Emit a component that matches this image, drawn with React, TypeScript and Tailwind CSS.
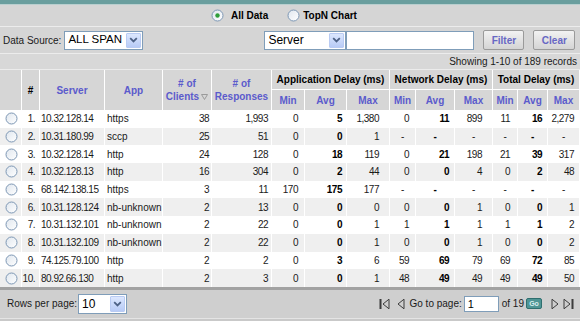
import React from "react";

type Row = {
  server: string;
  app: string;
  clients: string;
  responses: string;
  delays: string[];
};

const rows: Row[] = [
  { server: "10.32.128.14", app: "https", clients: "38", responses: "1,993", delays: ["0", "5", "1,380", "0", "11", "899", "11", "16", "2,279"] },
  { server: "10.31.180.99", app: "sccp", clients: "25", responses: "51", delays: ["0", "0", "1", "-", "-", "-", "-", "-", "-"] },
  { server: "10.32.128.14", app: "http", clients: "24", responses: "128", delays: ["0", "18", "119", "0", "21", "198", "21", "39", "317"] },
  { server: "10.32.128.13", app: "http", clients: "16", responses: "304", delays: ["0", "2", "44", "0", "0", "4", "0", "2", "48"] },
  { server: "68.142.138.15", app: "https", clients: "3", responses: "11", delays: ["170", "175", "177", "-", "-", "-", "-", "-", "-"] },
  { server: "10.31.128.124", app: "nb-unknown", clients: "2", responses: "13", delays: ["0", "0", "0", "0", "0", "1", "0", "0", "1"] },
  { server: "10.31.132.101", app: "nb-unknown", clients: "2", responses: "22", delays: ["0", "0", "1", "1", "1", "1", "1", "1", "2"] },
  { server: "10.31.132.109", app: "nb-unknown", clients: "2", responses: "22", delays: ["0", "0", "1", "0", "0", "1", "0", "0", "2"] },
  { server: "74.125.79.100", app: "http", clients: "2", responses: "2", delays: ["0", "3", "6", "59", "69", "79", "69", "72", "85"] },
  { server: "80.92.66.130", app: "http", clients: "2", responses: "3", delays: ["0", "0", "1", "48", "49", "49", "49", "49", "50"] },
];

// right padding for the numeric columns (clients, responses, 9 delay columns)
const pads = [
  "pr-[2px]",
  "pr-[3px]",
  "pr-[6px]",
  "pr-[4px]",
  "pr-[10px]",
  "pr-[6px]",
  "pr-[5px]",
  "pr-[10px]",
  "pr-[7px]",
  "pr-[5px]",
  "pr-[5px]",
];

const cols =
  "grid grid-cols-[22px_18px_65px_58px_49px_60px_33px_42px_43px_26px_39px_38px_25px_30px_32px]";

const Radio = ({ checked = false }: { checked?: boolean }) => (
  <svg width="13" height="13" viewBox="0 0 13 13" className="shrink-0">
    <defs>
      <linearGradient id="radioFill" x1="0" y1="0" x2="1" y2="1">
        <stop offset="0" stopColor="#dfe6ee" />
        <stop offset="1" stopColor="#ffffff" />
      </linearGradient>
    </defs>
    <circle cx="6.5" cy="6.5" r="5.5" fill="url(#radioFill)" stroke="#7d97b4" strokeWidth="1" />
    {checked && <circle cx="6.5" cy="6.5" r="2.2" fill="#2f9e3a" />}
  </svg>
);

const Chevron = () => (
  <svg width="9" height="6" viewBox="0 0 9 6">
    <path d="M1.2 1.2 L4.5 4.4 L7.8 1.2" stroke="#4d6185" strokeWidth="1.8" fill="none" />
  </svg>
);

const Select = ({
  value,
  className,
  textClass = "text-[12px]",
}: {
  value: string;
  className: string;
  textClass?: string;
}) => (
  <div className={`flex items-stretch border border-[#7f9db9] bg-white ${className}`}>
    <span
      className={`flex flex-1 items-center overflow-hidden whitespace-nowrap pl-[3px] text-black ${textClass}`}
    >
      {value}
    </span>
    <span className="m-[1px] flex w-[15px] shrink-0 items-center justify-center rounded-[1px] border border-[#b9cbf3] bg-gradient-to-b from-[#dce7fe] to-[#b8cbf6]">
      <Chevron />
    </span>
  </div>
);

const Btn = ({ label, className }: { label: string; className: string }) => (
  <button
    className={`flex h-[20px] items-center justify-center rounded-[2px] border border-[#9a9a9a] bg-gradient-to-b from-[#f2f2f2] to-[#d4d4d4] text-[10px] font-bold text-[#6767c4] ${className}`}
  >
    {label}
  </button>
);

const First = () => (
  <svg width="11" height="12" viewBox="0 0 11 12">
    <rect x="0.5" y="1" width="2" height="10" fill="#3c3c3c" />
    <path d="M10 1.2 L10 10.8 L4 6 Z" fill="none" stroke="#3c3c3c" strokeWidth="1" />
  </svg>
);
const Prev = () => (
  <svg width="8" height="12" viewBox="0 0 8 12">
    <path d="M7 1.2 L7 10.8 L1 6 Z" fill="none" stroke="#3c3c3c" strokeWidth="1" />
  </svg>
);
const Next = () => (
  <svg width="8" height="12" viewBox="0 0 8 12">
    <path d="M1 1.2 L1 10.8 L7 6 Z" fill="none" stroke="#3c3c3c" strokeWidth="1" />
  </svg>
);
const Last = () => (
  <svg width="11" height="12" viewBox="0 0 11 12">
    <path d="M1 1.2 L1 10.8 L7 6 Z" fill="none" stroke="#3c3c3c" strokeWidth="1" />
    <rect x="8.5" y="1" width="2" height="10" fill="#3c3c3c" />
  </svg>
);

const SortDown = () => (
  <svg width="7" height="6" viewBox="0 0 7 6" className="ml-[2px] inline-block">
    <path d="M0.5 0.5 L6.5 0.5 L3.5 5.5 Z" fill="none" stroke="#9a9a9a" strokeWidth="1" />
  </svg>
);

const th = "flex items-center justify-center border-r border-white text-[10px] font-bold";
const blue = "text-[#5b5bcc]";

export default function App() {
  return (
    <div className="w-[580px] h-[321px] overflow-hidden bg-[#d5d5d5] font-['Liberation_Sans',Arial,sans-serif] text-[10px] text-[#1a1a1a]">
      {/* top bar */}
      <div className="h-[4px] bg-[#6a9e9e]" />
      <div className="h-[1px] bg-[#b9cfcf]" />

      {/* view switch */}
      <div className="flex h-[21px] items-center pl-[211px]">
        <Radio checked />
        <span className="ml-[7px] font-bold text-black">All Data</span>
        <span className="ml-[19px] flex">
          <Radio />
        </span>
        <span className="ml-[3px] font-bold text-black">TopN Chart</span>
      </div>
      <div className="h-[1px] bg-[#ececec]" />

      {/* filter row */}
      <div className="flex h-[26px] items-center pl-[3px]">
        <span>Data Source:</span>
        <Select value="ALL SPAN" className="ml-[3px] h-[19px] w-[79px]" textClass="text-[11.5px]" />
        <Select value="Server" className="ml-[121px] h-[19px] w-[82px]" />
        <div className="h-[19px] w-[128px] border border-[#7f9db9] bg-white" />
        <Btn label="Filter" className="ml-[9px] w-[41px]" />
        <Btn label="Clear" className="ml-[9px] w-[42px]" />
      </div>
      <div className="h-[1px] bg-[#ececec]" />

      {/* info row */}
      <div className="flex h-[15px] items-center justify-end bg-[#d8d8d8] pr-[3px]">
        Showing 1-10 of 189 records
      </div>
      <div className="h-[1px] bg-[#ececec]" />

      {/* header */}
      <div className={`${cols} h-[40px] grid-rows-[20px_20px] bg-[#d6d6d6]`}>
        <div className={`${th} row-span-2`} />
        <div className={`${th} row-span-2 text-black`}>#</div>
        <div className={`${th} row-span-2 ${blue}`}>Server</div>
        <div className={`${th} row-span-2 ${blue}`}>App</div>
        <div className={`${th} row-span-2 flex-col leading-[13px] ${blue}`}>
          <span># of</span>
          <span className="flex items-center">
            Clients
            <SortDown />
          </span>
        </div>
        <div className={`${th} row-span-2 flex-col leading-[13px] ${blue}`}>
          <span># of</span>
          <span>Responses</span>
        </div>
        <div className={`${th} col-span-3 border-b text-black`}>Application Delay (ms)</div>
        <div className={`${th} col-span-3 border-b text-black`}>Network Delay (ms)</div>
        <div className={`${th} col-span-3 border-b text-black`}>Total Delay (ms)</div>
        {["Min", "Avg", "Max", "Min", "Avg", "Max", "Min", "Avg", "Max"].map((h, i) => (
          <div key={i} className={`${th} ${blue}`}>
            {h}
          </div>
        ))}
      </div>

      {/* body */}
      <div>
        {rows.map((r, i) => {
          const nums = [r.clients, r.responses, ...r.delays];
          return (
            <div
              key={i}
              className={`${cols} h-[17.7px] ${i % 2 === 0 ? "bg-white" : "bg-[#efefef]"}`}
            >
              <div className="flex items-center justify-center border-r border-white pl-[1px]">
                <Radio />
              </div>
              <div className="flex items-center justify-end border-r border-white pr-[4px] tracking-[-0.5px]">
                {i + 1}.
              </div>
              <div className="flex items-center overflow-hidden whitespace-nowrap border-r border-white pl-[1px] tracking-[-0.5px]">
                {r.server}
              </div>
              <div className="flex items-center whitespace-nowrap border-r border-white pl-[2px]">
                {r.app}
              </div>
              {nums.map((v, j) => {
                const bold = j === 3 || j === 6 || j === 9;
                return (
                  <div
                    key={j}
                    className={`flex items-center border-r border-white tracking-[-0.5px] ${
                      v === "-" ? "justify-center" : `justify-end ${pads[j]}`
                    } ${bold ? "font-bold text-black" : ""}`}
                  >
                    {v}
                  </div>
                );
              })}
            </div>
          );
        })}
      </div>

      {/* footer */}
      <div className="h-[3px] bg-[#a2a2a2]" />
      <div className="flex h-[28px] items-center bg-[#cfcfcf] pl-[7px] pr-[6px]">
        <span>Rows per page:</span>
        <Select value="10" className="ml-[1px] h-[20px] w-[49px]" />
        <div className="ml-auto flex items-center">
          <First />
          <span className="ml-[7px] flex">
            <Prev />
          </span>
          <span className="ml-[4px]">Go to page:</span>
          <div className="ml-[2px] flex h-[16px] w-[35px] items-center border border-[#7f9db9] bg-white pl-[3px] text-[11px] text-black">
            1
          </div>
          <span className="ml-[3px]">of 19</span>
          <button className="ml-[2px] flex h-[11px] w-[16px] items-center justify-center rounded-[2px] border border-[#2f6f6f] bg-[#4f9595] text-[7px] font-bold leading-none text-[#d9eeee]">
            Go
          </button>
          <span className="ml-[9px] flex">
            <Next />
          </span>
          <span className="ml-[4px] flex">
            <Last />
          </span>
        </div>
      </div>
      <div className="h-[3px] border-t border-[#e4e4e4] bg-[#c9c9c9]" />
    </div>
  );
}
